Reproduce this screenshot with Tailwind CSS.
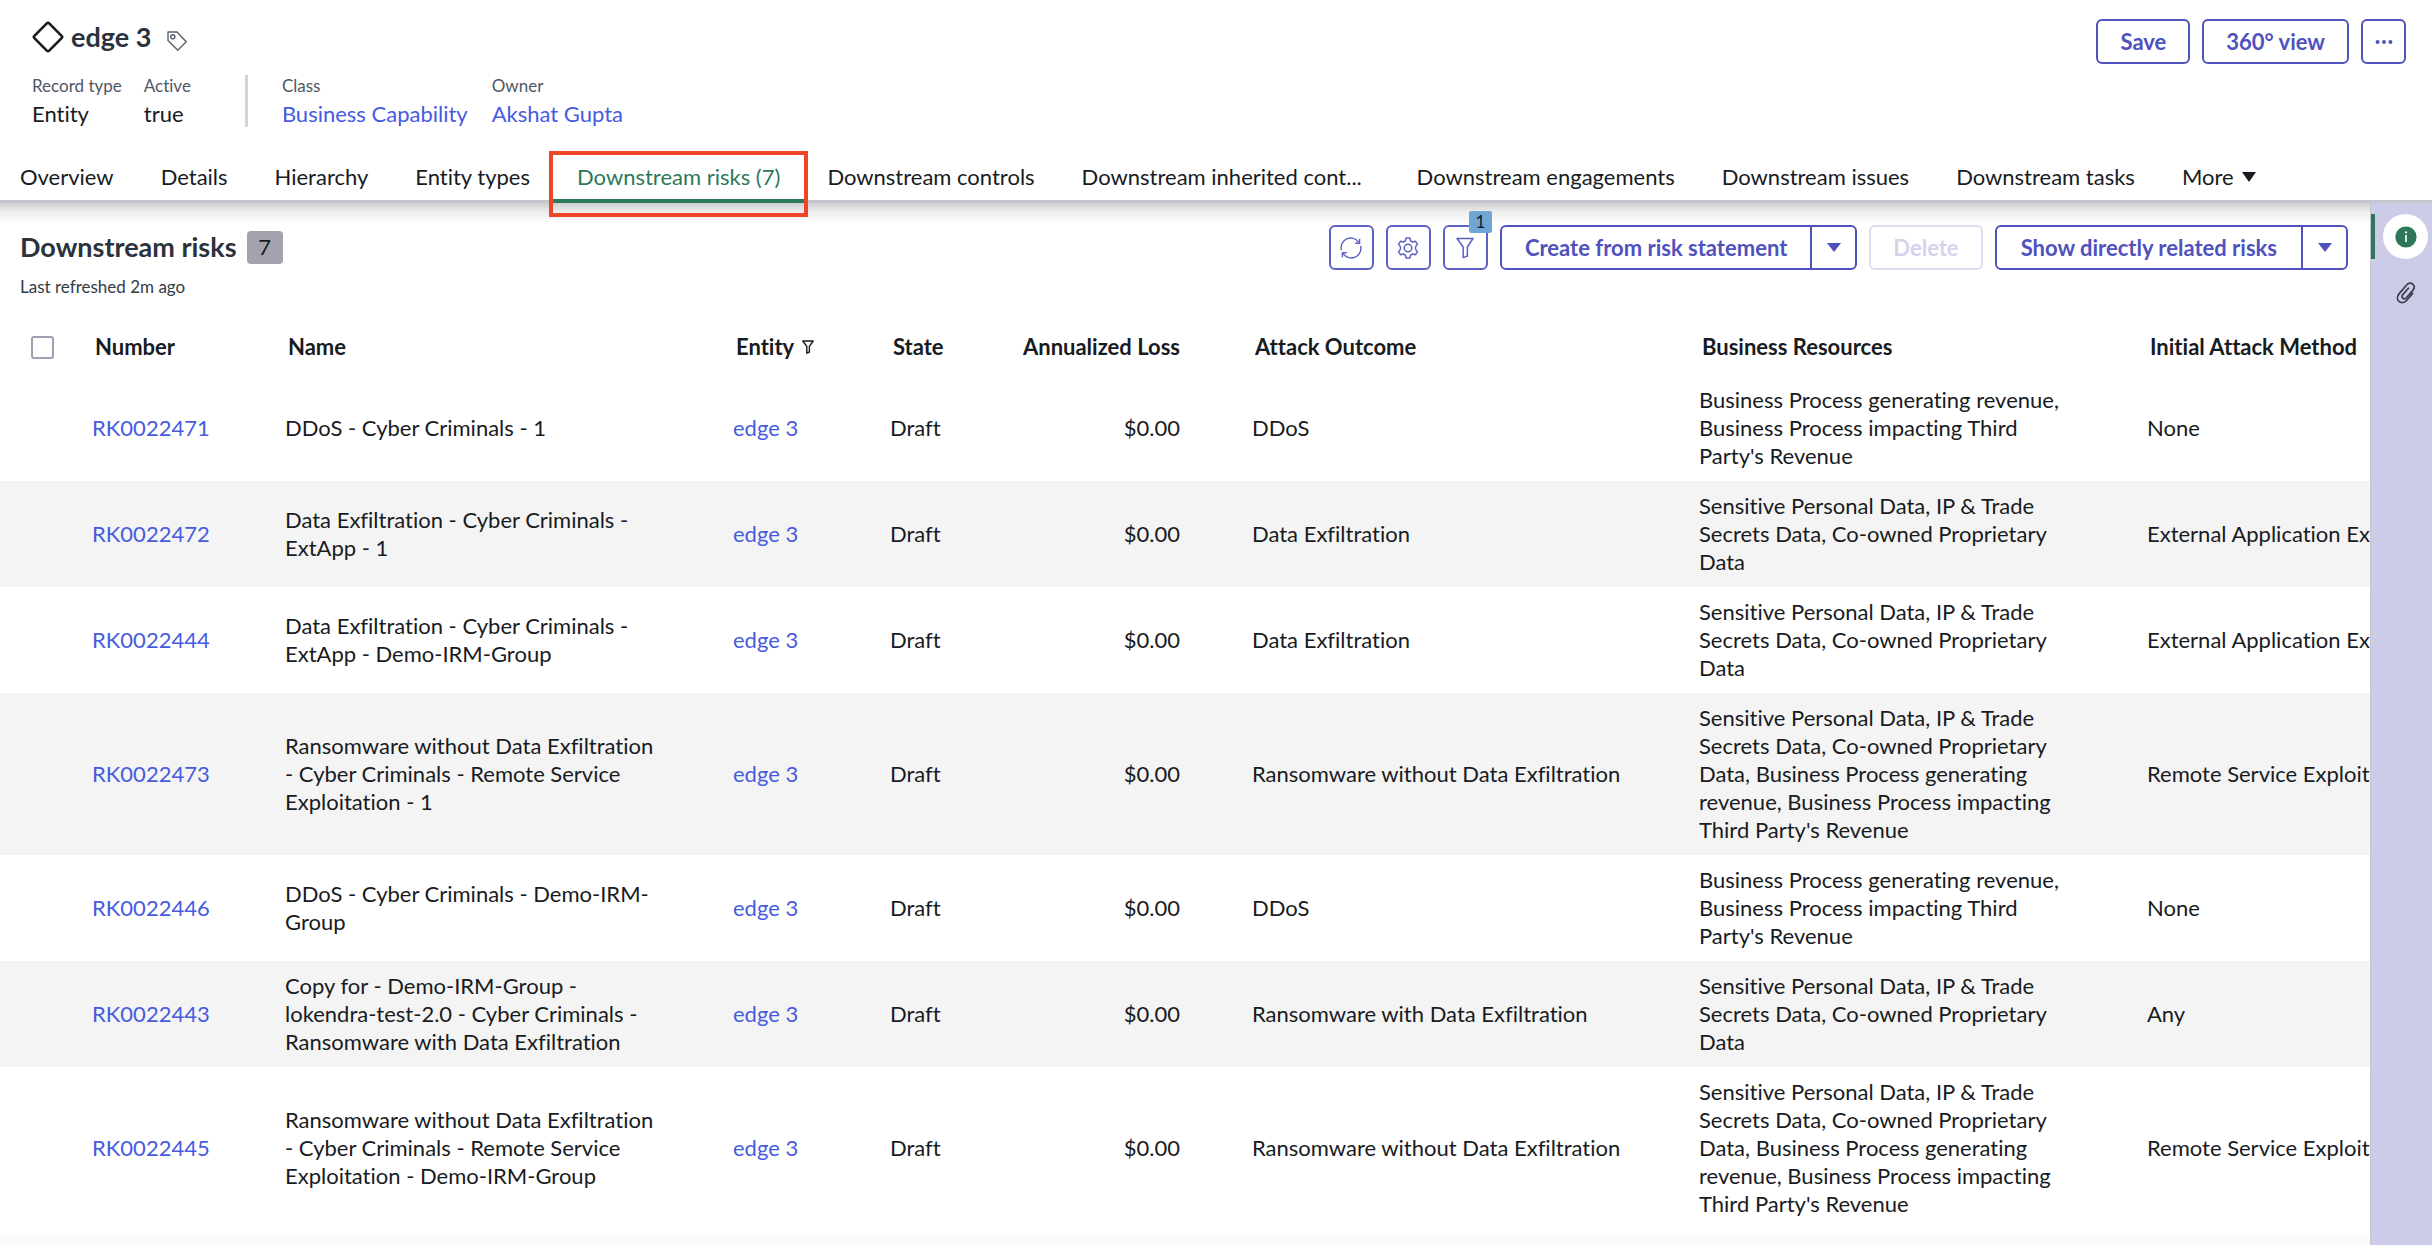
<!DOCTYPE html>
<html lang="en">
<head>
    <meta charset="UTF-8">
    <meta name="viewport" content="width=device-width, initial-scale=1.0">
    <title>edge 3 | Downstream risks</title>
    <script src="https://cdn.jsdelivr.net/npm/@tailwindcss/browser@4"></script>
</head>
<body class="min-h-screen flex flex-col overflow-x-hidden bg-white font-[Lato,sans-serif] text-[22px] leading-7 text-[#181b22] [font-variant-ligatures:none]">

    <!-- Record header -->
    <header class="flex justify-between pl-8 pr-[26px] pt-[19px]">
        <div>
            <div class="flex items-center h-9">
                <svg class="w-8 h-8" viewBox="0 0 32 32" fill="none" stroke="#181b22" stroke-width="2.6" stroke-linejoin="round">
                    <path d="M14.8 2.4Q16 1.2 17.2 2.4L29.6 14.8Q30.8 16 29.6 17.2L17.2 29.6Q16 30.8 14.8 29.6L2.4 17.2Q1.2 16 2.4 14.8Z"/>
                </svg>
                <h1 class="ml-[7px] text-[27px] leading-9 font-bold text-[#2b323d]">edge 3</h1>
                <button type="button" aria-label="Tags" class="ml-4 mt-2">
                    <svg class="w-5 h-5" viewBox="0 0 20 20" fill="none" stroke="#596070" stroke-width="1.4" stroke-linejoin="round">
                        <path d="M1 1H10L19.2 10.8 10.8 19.2 1 9.6Z"/>
                        <circle cx="5.8" cy="5.8" r="2.1"/>
                    </svg>
                </button>
            </div>
            <div class="mt-[17px] flex">
                <dl class="flex gap-[22px]">
                    <div>
                        <dt class="text-[17px] text-[#4f5665]">Record type</dt>
                        <dd>Entity</dd>
                    </div>
                    <div>
                        <dt class="text-[17px] text-[#4f5665]">Active</dt>
                        <dd>true</dd>
                    </div>
                </dl>
                <div class="ml-[54px] mr-[34px] mt-[3px] w-[3px] h-[52px] bg-[#d3d3da]"></div>
                <dl class="flex gap-6">
                    <div>
                        <dt class="text-[17px] text-[#4f5665]">Class</dt>
                        <dd><a href="#" class="text-[#465be0]">Business Capability</a></dd>
                    </div>
                    <div>
                        <dt class="text-[17px] text-[#4f5665]">Owner</dt>
                        <dd><a href="#" class="text-[#465be0]">Akshat Gupta</a></dd>
                    </div>
                </dl>
            </div>
        </div>
        <div class="flex items-start gap-3 font-bold text-[#4f52bd]">
            <button type="button" class="h-[45px] px-[22px] border-2 border-[#4f52bd] rounded-md">Save</button>
            <button type="button" class="h-[45px] px-[22px] border-2 border-[#4f52bd] rounded-md">360° view</button>
            <button type="button" aria-label="More actions" class="flex items-center justify-center w-[45px] h-[45px] border-2 border-[#4f52bd] rounded-md">
                <svg class="w-5 h-5" viewBox="0 0 20 20" fill="#4f52bd">
                    <circle cx="3.6" cy="10" r="2"/><circle cx="10" cy="10" r="2"/><circle cx="16.4" cy="10" r="2"/>
                </svg>
            </button>
        </div>
    </header>

    <!-- Tabs -->
    <nav class="relative z-10 mt-[26px] h-[49px] flex items-center gap-[47px] pl-5 border-b-3 border-[#c4c5cd] whitespace-nowrap">
        <a href="#">Overview</a>
        <a href="#">Details</a>
        <a href="#">Hierarchy</a>
        <a href="#">Entity types</a>
        <a href="#" aria-current="page" class="relative self-stretch flex items-center text-[#2d7858]">
            Downstream risks (7)
            <span class="absolute -inset-x-6 -bottom-[3px] h-1 bg-[#2d7858]"></span>
            <span class="absolute -inset-x-7 -top-[3px] -bottom-[17px] border-4 border-[#ee4527]"></span>
        </a>
        <a href="#">Downstream controls</a>
        <a href="#" class="w-[288px]">Downstream inherited cont...</a>
        <a href="#">Downstream engagements</a>
        <a href="#">Downstream issues</a>
        <a href="#">Downstream tasks</a>
        <button type="button" class="flex items-center gap-2">
            More
            <svg class="w-[14px] h-[10px]" viewBox="0 0 14 10" fill="#181b22"><path d="M0 0H14L7 10Z"/></svg>
        </button>
    </nav>

    <div class="flex-1 flex pb-[7px]">
        <main class="relative flex-1 min-w-0 flex flex-col overflow-hidden">
            <div class="absolute inset-x-0 top-0 h-[19px] bg-linear-to-b from-[#cfcfcf] via-[#efefef] to-[#fafafa]"></div>

            <!-- List toolbar -->
            <div class="relative flex justify-between pl-5 pr-[22px] pt-[22px]">
                <div>
                    <div class="flex items-center gap-[10px] h-11">
                        <h2 class="text-[27px] font-bold text-[#2b323d]">Downstream risks</h2>
                        <span class="w-9 h-[33px] flex items-center justify-center rounded-sm bg-[#a3a3ad]">7</span>
                    </div>
                    <p class="mt-1 text-[17px] text-[#343a46]">Last refreshed 2m ago</p>
                </div>
                <div class="flex items-start gap-3 font-bold text-[#4f52bd]">
                    <button type="button" aria-label="Refresh" class="w-[45px] h-[45px] flex items-center justify-center border-2 border-[#5d60c4] rounded-md bg-white">
                        <svg class="w-[22px] h-[22px]" viewBox="0 0 22 22" fill="none" stroke="#5d60c4" stroke-width="1.4">
                            <path d="M1.4 13A9.6 9.6 0 0 1 18.6 5.2M20.6 9A9.6 9.6 0 0 1 3.4 16.8M19.6 1.8V6.2H15.2M2.4 20.2V15.8H6.8"/>
                        </svg>
                    </button>
                    <button type="button" aria-label="List settings" class="w-[45px] h-[45px] flex items-center justify-center border-2 border-[#5d60c4] rounded-md bg-white">
                        <svg class="w-[22px] h-[22px]" viewBox="0 0 22 22" fill="none" stroke="#5d60c4" stroke-width="1.5" stroke-linejoin="round">
                            <path d="M9.2 1H12.8L13.6 3.8 15.6 5 18.4 4.2 20.4 7.4 18.6 9.6V12.4L20.4 14.6 18.4 17.8 15.6 17 13.6 18.2 12.8 21H9.2L8.4 18.2 6.4 17 3.6 17.8 1.6 14.6 3.4 12.4V9.6L1.6 7.4 3.6 4.2 6.4 5 8.4 3.8Z"/>
                            <circle cx="11" cy="11" r="3.8"/>
                        </svg>
                    </button>
                    <button type="button" aria-label="Filter, 1 condition" class="relative w-[45px] h-[45px] flex items-center justify-center border-2 border-[#5d60c4] rounded-md bg-white">
                        <svg class="w-[18px] h-[22px]" viewBox="0 0 18 22" fill="none" stroke="#5d60c4" stroke-width="1.5" stroke-linejoin="round">
                            <path d="M1 1.5H17L11.4 10V19L7.2 20.6V10Z"/>
                        </svg>
                        <span class="absolute -top-4 -right-1.5 w-[23px] h-[22px] flex items-center justify-center rounded-xs bg-[#6fa6d6] text-[17px] font-normal text-[#181b22]">1</span>
                    </button>
                    <div class="flex h-[45px] border-2 border-[#4f52bd] rounded-md bg-white">
                        <button type="button" class="px-[23px]">Create from risk statement</button>
                        <button type="button" aria-label="More create options" class="w-[45px] flex items-center justify-center border-l-2 border-[#4f52bd]">
                            <svg class="w-[14px] h-[9px]" viewBox="0 0 14 9" fill="#4f52bd"><path d="M0 0H14L7 9Z"/></svg>
                        </button>
                    </div>
                    <button type="button" disabled class="h-[45px] px-[22px] border-2 border-[#dcdbf0] rounded-md bg-white text-[#d4d3ec]">Delete</button>
                    <div class="flex h-[45px] border-2 border-[#4f52bd] rounded-md bg-white">
                        <button type="button" class="px-6">Show directly related risks</button>
                        <button type="button" aria-label="More related options" class="w-[45px] flex items-center justify-center border-l-2 border-[#4f52bd]">
                            <svg class="w-[14px] h-[9px]" viewBox="0 0 14 9" fill="#4f52bd"><path d="M0 0H14L7 9Z"/></svg>
                        </button>
                    </div>
                </div>
            </div>

            <!-- Risk list -->
            <table class="mt-[18px] w-[2640px] table-fixed text-left">
                <colgroup>
                    <col class="w-[60px]">
                    <col class="w-[193px]">
                    <col class="w-[448px]">
                    <col class="w-[157px]">
                    <col class="w-[126px]">
                    <col class="w-[236px]">
                    <col class="w-[447px]">
                    <col class="w-[448px]">
                    <col>
                </colgroup>
                <thead>
                    <tr class="h-14 whitespace-nowrap">
                        <th class="pl-[31px]">
                            <input type="checkbox" aria-label="Select all" class="block appearance-none w-[23px] h-[23px] border-2 border-[#9da0b0] rounded-[3px] bg-white">
                        </th>
                        <th class="px-[35px] font-bold">Number</th>
                        <th class="px-[35px] font-bold">Name</th>
                        <th class="pl-[35px] font-bold">
                            <span class="flex items-center gap-2">
                                Entity
                                <svg class="w-3 h-[14px]" viewBox="0 0 12 14" fill="none" stroke="#181b22" stroke-width="1.4" stroke-linejoin="round"><path d="M.8 1H11.2L7.4 6.4V12L4.8 13.2V6.4Z"/></svg>
                            </span>
                        </th>
                        <th class="px-[35px] font-bold">State</th>
                        <th class="pr-10 font-bold text-right">Annualized Loss</th>
                        <th class="px-[35px] font-bold">Attack Outcome</th>
                        <th class="px-[35px] font-bold">Business Resources</th>
                        <th class="px-[35px] font-bold">Initial Attack Method</th>
                    </tr>
                </thead>
                <tbody>
                    <tr class="even:bg-[#f4f4f4]">
                        <td></td>
                        <td class="pl-8 py-[11px]"><a href="#" class="text-[#465be0]">RK0022471</a></td>
                        <td class="pl-8 pr-[38px] py-[11px]">DDoS - Cyber Criminals - 1</td>
                        <td class="pl-8 py-[11px]"><a href="#" class="text-[#465be0]">edge 3</a></td>
                        <td class="pl-8 py-[11px]">Draft</td>
                        <td class="pr-10 py-[11px] text-right">$0.00</td>
                        <td class="pl-8 pr-[38px] py-[11px]">DDoS</td>
                        <td class="pl-8 pr-[38px] py-[11px]">Business Process generating revenue, Business Process impacting Third Party's Revenue</td>
                        <td class="pl-8 py-[11px] whitespace-nowrap">None</td>
                    </tr>
                    <tr class="even:bg-[#f4f4f4]">
                        <td></td>
                        <td class="pl-8 py-[11px]"><a href="#" class="text-[#465be0]">RK0022472</a></td>
                        <td class="pl-8 pr-[38px] py-[11px]">Data Exfiltration - Cyber Criminals - ExtApp - 1</td>
                        <td class="pl-8 py-[11px]"><a href="#" class="text-[#465be0]">edge 3</a></td>
                        <td class="pl-8 py-[11px]">Draft</td>
                        <td class="pr-10 py-[11px] text-right">$0.00</td>
                        <td class="pl-8 pr-[38px] py-[11px]">Data Exfiltration</td>
                        <td class="pl-8 pr-[38px] py-[11px]">Sensitive Personal Data, IP &amp; Trade Secrets Data, Co-owned Proprietary Data</td>
                        <td class="pl-8 py-[11px] whitespace-nowrap">External Application Exploitation</td>
                    </tr>
                    <tr class="even:bg-[#f4f4f4]">
                        <td></td>
                        <td class="pl-8 py-[11px]"><a href="#" class="text-[#465be0]">RK0022444</a></td>
                        <td class="pl-8 pr-[38px] py-[11px]">Data Exfiltration - Cyber Criminals - ExtApp - Demo-IRM-Group</td>
                        <td class="pl-8 py-[11px]"><a href="#" class="text-[#465be0]">edge 3</a></td>
                        <td class="pl-8 py-[11px]">Draft</td>
                        <td class="pr-10 py-[11px] text-right">$0.00</td>
                        <td class="pl-8 pr-[38px] py-[11px]">Data Exfiltration</td>
                        <td class="pl-8 pr-[38px] py-[11px]">Sensitive Personal Data, IP &amp; Trade Secrets Data, Co-owned Proprietary Data</td>
                        <td class="pl-8 py-[11px] whitespace-nowrap">External Application Exploitation</td>
                    </tr>
                    <tr class="even:bg-[#f4f4f4]">
                        <td></td>
                        <td class="pl-8 py-[11px]"><a href="#" class="text-[#465be0]">RK0022473</a></td>
                        <td class="pl-8 pr-[38px] py-[11px]">Ransomware without Data Exfiltration - Cyber Criminals - Remote Service Exploitation - 1</td>
                        <td class="pl-8 py-[11px]"><a href="#" class="text-[#465be0]">edge 3</a></td>
                        <td class="pl-8 py-[11px]">Draft</td>
                        <td class="pr-10 py-[11px] text-right">$0.00</td>
                        <td class="pl-8 pr-[38px] py-[11px]">Ransomware without Data Exfiltration</td>
                        <td class="pl-8 pr-[38px] py-[11px]">Sensitive Personal Data, IP &amp; Trade Secrets Data, Co-owned Proprietary Data, Business Process generating revenue, Business Process impacting Third Party's Revenue</td>
                        <td class="pl-8 py-[11px] whitespace-nowrap">Remote Service Exploitation</td>
                    </tr>
                    <tr class="even:bg-[#f4f4f4]">
                        <td></td>
                        <td class="pl-8 py-[11px]"><a href="#" class="text-[#465be0]">RK0022446</a></td>
                        <td class="pl-8 pr-[38px] py-[11px]">DDoS - Cyber Criminals - Demo-IRM-Group</td>
                        <td class="pl-8 py-[11px]"><a href="#" class="text-[#465be0]">edge 3</a></td>
                        <td class="pl-8 py-[11px]">Draft</td>
                        <td class="pr-10 py-[11px] text-right">$0.00</td>
                        <td class="pl-8 pr-[38px] py-[11px]">DDoS</td>
                        <td class="pl-8 pr-[38px] py-[11px]">Business Process generating revenue, Business Process impacting Third Party's Revenue</td>
                        <td class="pl-8 py-[11px] whitespace-nowrap">None</td>
                    </tr>
                    <tr class="even:bg-[#f4f4f4]">
                        <td></td>
                        <td class="pl-8 py-[11px]"><a href="#" class="text-[#465be0]">RK0022443</a></td>
                        <td class="pl-8 pr-[38px] py-[11px]">Copy for - Demo-IRM-Group - lokendra-test-2.0 - Cyber Criminals - Ransomware with Data Exfiltration</td>
                        <td class="pl-8 py-[11px]"><a href="#" class="text-[#465be0]">edge 3</a></td>
                        <td class="pl-8 py-[11px]">Draft</td>
                        <td class="pr-10 py-[11px] text-right">$0.00</td>
                        <td class="pl-8 pr-[38px] py-[11px]">Ransomware with Data Exfiltration</td>
                        <td class="pl-8 pr-[38px] py-[11px]">Sensitive Personal Data, IP &amp; Trade Secrets Data, Co-owned Proprietary Data</td>
                        <td class="pl-8 py-[11px] whitespace-nowrap">Any</td>
                    </tr>
                    <tr class="even:bg-[#f4f4f4]">
                        <td></td>
                        <td class="pl-8 py-[11px]"><a href="#" class="text-[#465be0]">RK0022445</a></td>
                        <td class="pl-8 pr-[38px] py-[11px]">Ransomware without Data Exfiltration - Cyber Criminals - Remote Service Exploitation - Demo-IRM-Group</td>
                        <td class="pl-8 py-[11px]"><a href="#" class="text-[#465be0]">edge 3</a></td>
                        <td class="pl-8 py-[11px]">Draft</td>
                        <td class="pr-10 py-[11px] text-right">$0.00</td>
                        <td class="pl-8 pr-[38px] py-[11px]">Ransomware without Data Exfiltration</td>
                        <td class="pl-8 pr-[38px] py-[11px]">Sensitive Personal Data, IP &amp; Trade Secrets Data, Co-owned Proprietary Data, Business Process generating revenue, Business Process impacting Third Party's Revenue</td>
                        <td class="pl-8 py-[11px] whitespace-nowrap">Remote Service Exploitation</td>
                    </tr>
                </tbody>
            </table>
            <div class="mt-auto h-[9px] bg-[#fafafa]"></div>
        </main>

        <!-- Contextual side bar -->
        <aside class="w-[62px] shrink-0 flex flex-col items-end bg-[#cccbe8] border-l border-[#c4c5cd] pt-[11px]">
            <button type="button" aria-label="Details" class="w-full h-[45px] flex items-center justify-end pr-1 border-l-4 border-[#2d7858]">
                <span class="w-[45px] h-[45px] flex items-center justify-center rounded-full bg-white">
                    <svg class="w-[22px] h-[22px]" viewBox="0 0 22 22">
                        <circle cx="11" cy="11" r="10.6" fill="#2d7858"/>
                        <circle cx="11" cy="6.4" r="1.1" fill="#fff"/>
                        <path d="M11 9V16" stroke="#fff" stroke-width="1.7"/>
                    </svg>
                </span>
            </button>
            <button type="button" aria-label="Attachments" class="mt-[11px] mr-1 w-[45px] h-[45px] flex items-center justify-center">
                <svg class="w-5 h-[22px]" viewBox="0 0 20 22" fill="none" stroke="#3a3f4b" stroke-width="1.7" stroke-linecap="round">
                    <path d="M16.6 11.4 10.8 18.2C8.6 20.8 5.2 21.4 3 19.4 .8 17.4 1 14.2 3.2 11.6L10.6 3C12.4 .8 15 .6 16.8 2.2 18.6 3.8 18.6 6.2 16.8 8.4L10.4 15.8C9.4 17 7.8 17.2 6.8 16.2 5.8 15.2 5.8 13.8 6.8 12.6L12.4 6.2"/>
                </svg>
            </button>
        </aside>
    </div>
</body>
</html>
